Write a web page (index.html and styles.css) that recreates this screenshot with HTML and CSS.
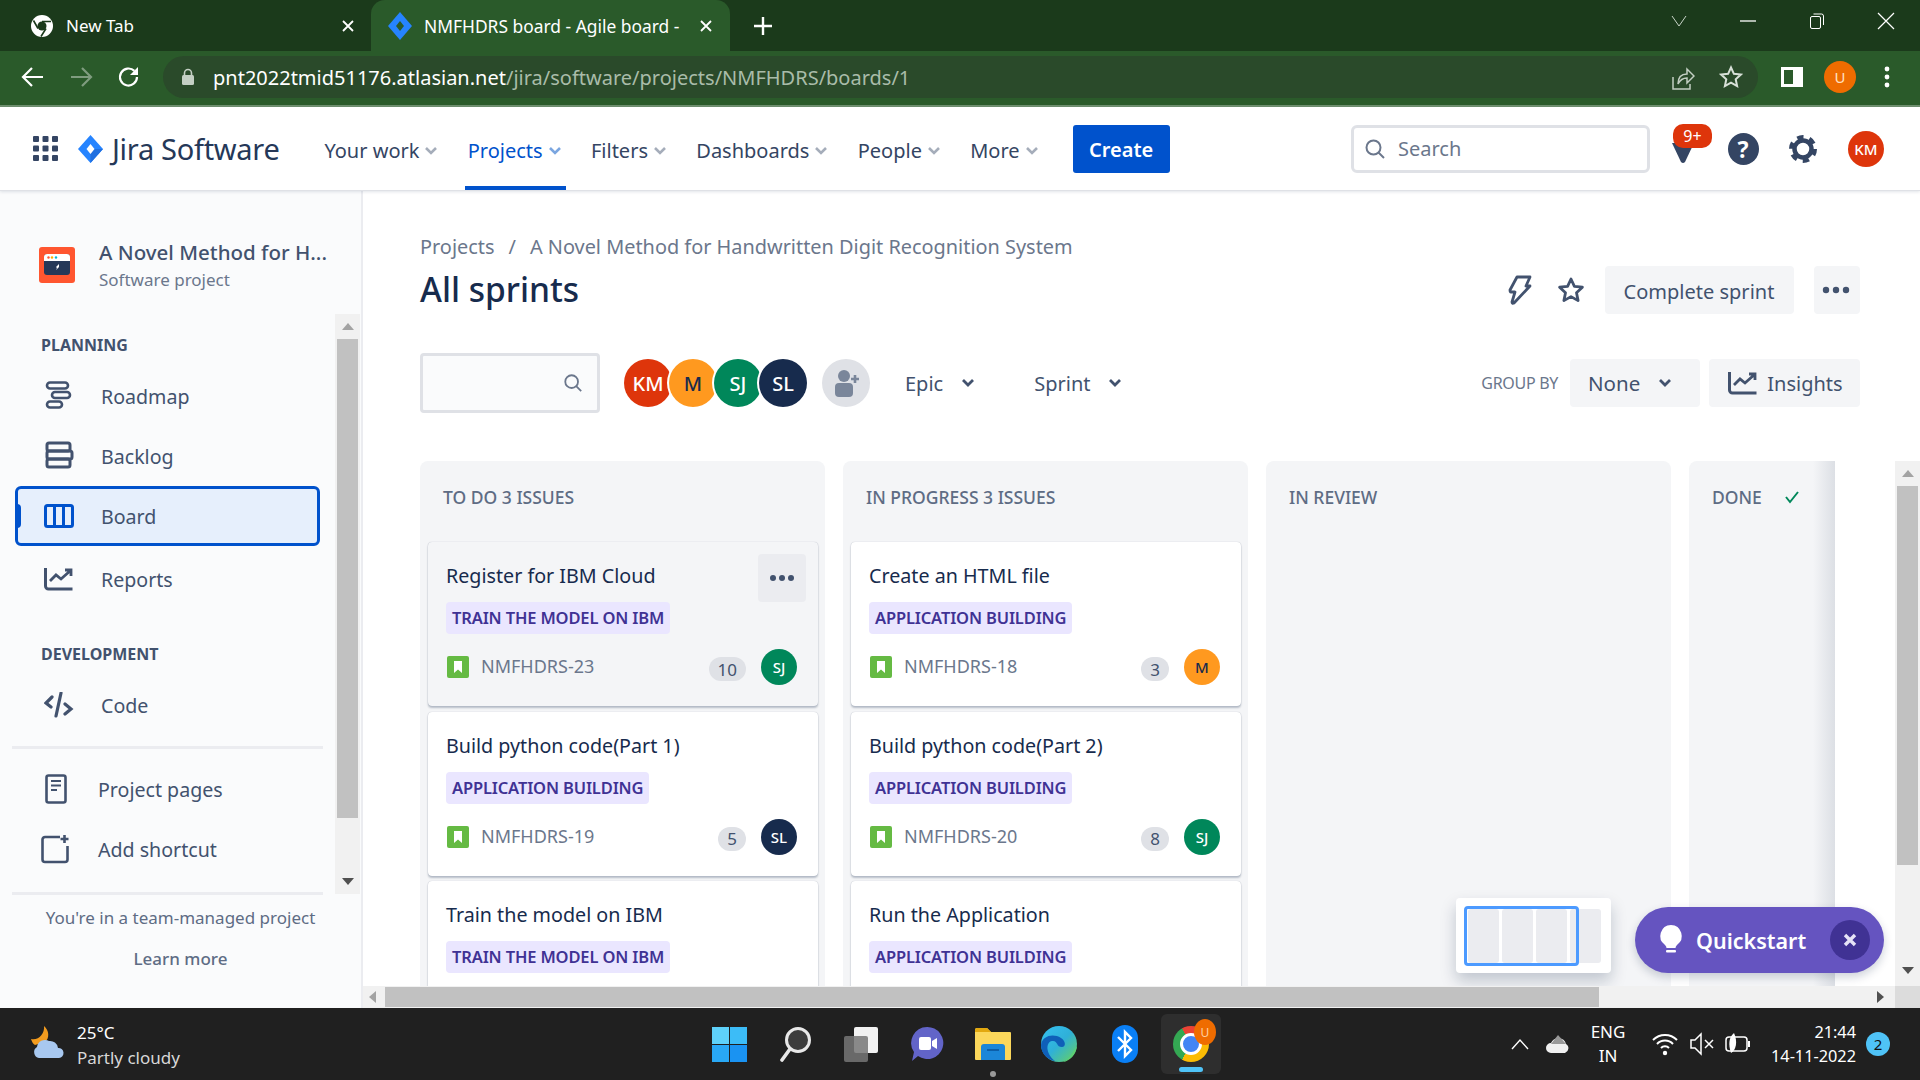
FILE: index.html
```html
<!DOCTYPE html>
<html lang="en">
<head>
<meta charset="utf-8">
<title>NMFHDRS board - Agile board</title>
<link rel="stylesheet" href="styles.css">
</head>
<body>
<header class="tabbar">
  <div class="tab">
    <svg class="fav" width="24" height="24" viewBox="0 0 24 24"><circle cx="12" cy="12" r="11" fill="#fff"/><circle cx="12" cy="12" r="4.5" fill="#1b3a1b"/><path d="M12 7.5h9M8 14.5 3.5 6.5M16 14.5 11 22.5" stroke="#1b3a1b" stroke-width="1.6" fill="none"/></svg>
    <span class="tab-title">New Tab</span>
    <svg class="tab-x" width="14" height="14" viewBox="0 0 14 14"><path d="M2 2l10 10M12 2 2 12" stroke="#fff" stroke-width="1.8"/></svg>
  </div>
  <div class="tab tab-active">
    <svg class="fav" width="24" height="28" viewBox="0 0 24 28"><path d="M12 0 24 14 12 28 0 14Z" fill="#2684ff"/><path d="M12 9 16 14 12 19 8 14Z" fill="#2a5a2a"/></svg>
    <span class="tab-title">NMFHDRS board - Agile board -</span>
    <svg class="tab-x" width="14" height="14" viewBox="0 0 14 14"><path d="M2 2l10 10M12 2 2 12" stroke="#fff" stroke-width="1.8"/></svg>
  </div>
  <svg class="newtab" width="20" height="20" viewBox="0 0 20 20"><path d="M10 1v18M1 10h18" stroke="#fff" stroke-width="2.4"/></svg>
  <div class="win-controls">
    <svg width="18" height="12" viewBox="0 0 18 12"><path d="M2 1l7 10 7-10" stroke="#c8d4c8" fill="none" stroke-width="1"/></svg>
    <svg width="16" height="4" viewBox="0 0 16 4"><path d="M0 2h16" stroke="#fff" stroke-width="1.3"/></svg>
    <svg width="16" height="16" viewBox="0 0 16 16"><rect x="1.5" y="3.5" width="10" height="12" rx="1.5" stroke="#fff" fill="none"/><path d="M4.5 1h8a2 2 0 0 1 2 2v9" stroke="#fff" fill="none"/></svg>
    <svg width="18" height="18" viewBox="0 0 18 18"><path d="M1 1l16 16M17 1 1 17" stroke="#fff" stroke-width="1.2"/></svg>
  </div>
</header>

<div class="toolbar">
  <svg class="tool" width="24" height="24" viewBox="0 0 24 24"><path d="M22 12H3M11 3l-9 9 9 9" stroke="#fff" stroke-width="2.2" fill="none"/></svg>
  <svg class="tool" width="24" height="24" viewBox="0 0 24 24"><path d="M2 12h19M13 3l9 9-9 9" stroke="#7f9c7f" stroke-width="2.2" fill="none"/></svg>
  <svg class="tool" width="24" height="24" viewBox="0 0 24 24"><path d="M20 12a8.5 8.5 0 1 1-2.6-6.1" stroke="#fff" stroke-width="2.2" fill="none"/><path d="M21 2v8h-8z" fill="#fff"/></svg>
  <div class="urlbar">
    <svg width="14" height="18" viewBox="0 0 14 18"><path d="M3.5 8V5a3.5 3.5 0 0 1 7 0v3" stroke="#c4cfc4" stroke-width="1.6" fill="none"/><rect x="1" y="7" width="12" height="10" rx="1.5" fill="#c4cfc4"/></svg>
    <span class="url"><span class="url-host">pnt2022tmid51176.atlasian.net</span>/jira/software/projects/NMFHDRS/boards/1</span>
    <svg class="url-share" width="24" height="26" viewBox="0 0 24 26"><path d="M2 13v12h17v-5" stroke="#c4cfc4" stroke-width="1.5" fill="none"/><path d="M7 20c0-7 4-10 9-10V5l7 7-7 7v-5c-4 0-7 2-9 6z" stroke="#c4cfc4" stroke-width="1.5" fill="none"/></svg>
    <svg width="24" height="24" viewBox="0 0 24 24"><path d="M12 2.500l2.900 6.300 6.900.8-5.100 4.700 1.400 6.800-6.100-3.400-6.100 3.400 1.400-6.800-5.100-4.700 6.900-.8z" stroke="#d8e0d8" stroke-width="2" fill="none"/></svg>
  </div>
  <svg class="panel" width="22" height="20" viewBox="0 0 22 20"><rect x="1.500" y="1.500" width="19" height="17" stroke="#fff" stroke-width="3" fill="none"/><rect x="12" y="1" width="9" height="18" fill="#fff"/></svg>
  <span class="profile">U</span>
  <svg class="dots" width="6" height="22" viewBox="0 0 6 22"><circle cx="3" cy="3" r="2.400" fill="#fff"/><circle cx="3" cy="11" r="2.400" fill="#fff"/><circle cx="3" cy="19" r="2.400" fill="#fff"/></svg>
</div>

<nav class="topnav">
  <svg class="apps" width="25" height="25" viewBox="0 0 25 25"><g fill="#344563"><rect width="6" height="6" rx="1"/><rect x="9.500" width="6" height="6" rx="1"/><rect x="19" width="6" height="6" rx="1"/><rect y="9.500" width="6" height="6" rx="1"/><rect x="9.500" y="9.500" width="6" height="6" rx="1"/><rect x="19" y="9.500" width="6" height="6" rx="1"/><rect y="19" width="6" height="6" rx="1"/><rect x="9.500" y="19" width="6" height="6" rx="1"/><rect x="19" y="19" width="6" height="6" rx="1"/></g></svg>
  <div class="brand">
    <svg width="25" height="28" viewBox="0 0 25 28"><path d="M12.500 0 25 14 12.500 28 0 14Z" fill="#2684ff"/><path d="M12.500 14 25 14 12.500 28Z" fill="#1f6fe0"/><path d="M12.500 9 16.500 14 12.500 19 8.500 14Z" fill="#fff"/></svg>
    <span>Jira Software</span>
  </div>
  <div class="nav-items">
    <span class="nav-item">Your work<svg class="chev" width="16" height="12" viewBox="0 0 16 12"><path d="M3 3l5 5 5-5" stroke="#a5adba" stroke-width="2.600" fill="none"/></svg></span>
    <span class="nav-item nav-current">Projects<svg class="chev" width="16" height="12" viewBox="0 0 16 12"><path d="M3 3l5 5 5-5" stroke="#7ba6e0" stroke-width="2.600" fill="none"/></svg></span>
    <span class="nav-item">Filters<svg class="chev" width="16" height="12" viewBox="0 0 16 12"><path d="M3 3l5 5 5-5" stroke="#a5adba" stroke-width="2.600" fill="none"/></svg></span>
    <span class="nav-item">Dashboards<svg class="chev" width="16" height="12" viewBox="0 0 16 12"><path d="M3 3l5 5 5-5" stroke="#a5adba" stroke-width="2.600" fill="none"/></svg></span>
    <span class="nav-item">People<svg class="chev" width="16" height="12" viewBox="0 0 16 12"><path d="M3 3l5 5 5-5" stroke="#a5adba" stroke-width="2.600" fill="none"/></svg></span>
    <span class="nav-item">More<svg class="chev" width="16" height="12" viewBox="0 0 16 12"><path d="M3 3l5 5 5-5" stroke="#a5adba" stroke-width="2.600" fill="none"/></svg></span>
  </div>
  <button class="create">Create</button>
  <div class="search">
    <svg width="22" height="22" viewBox="0 0 22 22"><circle cx="9.500" cy="9.500" r="7" stroke="#6b778c" stroke-width="2" fill="none"/><path d="M14.500 14.500 20 20" stroke="#6b778c" stroke-width="2"/></svg>
    <span>Search</span>
  </div>
  <div class="nav-cell nav-bell">
    <svg width="24" height="24" viewBox="0 0 24 24"><path d="M1 3h22L14 22q-2 2-4 0z" fill="#344563"/></svg>
    <span class="badge">9+</span>
  </div>
  <div class="nav-cell">
    <span class="help">?</span>
  </div>
  <div class="nav-cell">
    <svg width="30" height="30" viewBox="0 0 30 30"><circle cx="15" cy="15" r="8.500" stroke="#344563" stroke-width="4.500" fill="none"/><circle cx="15" cy="15" r="12" stroke="#344563" stroke-width="4" fill="none" stroke-dasharray="6.420 6.150"/></svg>
  </div>
  <div class="nav-cell nav-me"><span class="avatar av-km">KM</span></div>
</nav>

<div class="workspace">
  <aside class="sidebar">
    <div class="project">
      <svg width="36" height="36" viewBox="0 0 36 36"><rect width="36" height="36" rx="3" fill="#ff5630"/><rect x="5" y="7" width="26" height="21" rx="3" fill="#253858"/><path d="M5 14v-4a3 3 0 0 1 3-3h20a3 3 0 0 1 3 3v4z" fill="#fff"/><circle cx="9.500" cy="10.500" r="1.200" fill="#ff5630"/><circle cx="13" cy="10.500" r="1.200" fill="#ffab00"/><circle cx="17" cy="10.500" r="1.200" fill="#00b8d9"/><path d="M20 17l-3 3 1 1-1 2 3-3z" fill="#fff"/></svg>
      <div class="project-text">
        <div class="project-name">A Novel Method for H...</div>
        <div class="project-type">Software project</div>
      </div>
    </div>
    <div class="side-scroll">
      <div class="side-nav">
        <div class="side-heading">PLANNING</div>
        <div class="side-item">
          <svg width="30" height="30" viewBox="0 0 30 30"><g fill="none" stroke="#42526e" stroke-width="2.600"><rect x="3" y="1.500" width="21" height="6" rx="3"/><rect x="8" y="11" width="18" height="6" rx="3"/><rect x="3" y="20.500" width="15" height="6" rx="3"/></g></svg>
          <span>Roadmap</span>
        </div>
        <div class="side-item">
          <svg width="30" height="30" viewBox="0 0 30 30"><g fill="none" stroke="#42526e" stroke-width="3"><rect x="3" y="2" width="23" height="8" rx="2"/><rect x="3" y="10" width="25" height="8" rx="2"/><rect x="3" y="18" width="23" height="8" rx="2"/></g></svg>
          <span>Backlog</span>
        </div>
        <div class="side-item side-active">
          <svg width="30" height="24" viewBox="0 0 30 24"><rect x="1.500" y="1.500" width="27" height="21" rx="2" stroke="#0052cc" stroke-width="3" fill="none"/><path d="M10.500 1v22M19.500 1v22" stroke="#0052cc" stroke-width="3"/></svg>
          <span>Board</span>
        </div>
        <div class="side-item side-reports">
          <svg width="30" height="24" viewBox="0 0 30 24"><path d="M1.500 1v18a3 3 0 0 0 3 3h24" stroke="#42526e" stroke-width="3" fill="none"/><path d="M6 14l6-6 5 4 9-8M21 3h6v6" stroke="#42526e" stroke-width="2.800" fill="none"/></svg>
          <span>Reports</span>
        </div>
        <div class="side-heading side-heading-dev">DEVELOPMENT</div>
        <div class="side-item">
          <svg width="30" height="26" viewBox="0 0 30 26"><path d="M8 5 2 11l5 4M21 12l6 5-6 5M17 1l-5 23" stroke="#42526e" stroke-width="3.200" stroke-linecap="round" fill="none"/></svg>
          <span>Code</span>
        </div>
        <div class="side-divider"></div>
        <div class="side-item side-tight">
          <svg width="30" height="30" viewBox="0 0 30 30"><rect x="2.500" y="1.500" width="19" height="27" rx="2" stroke="#42526e" stroke-width="2.600" fill="none"/><path d="M7 7h10M7 11.500h10M7 16h6" stroke="#42526e" stroke-width="2.200"/></svg>
          <span>Project pages</span>
        </div>
        <div class="side-item side-tight">
          <svg class="side-add" width="30" height="30" viewBox="0 0 30 30"><path d="M19 3H4a2.500 2.500 0 0 0-2.500 2.500v20A2.500 2.500 0 0 0 4 28h20a2.500 2.500 0 0 0 2.500-2.500V12" stroke="#42526e" stroke-width="2.600" fill="none"/><path d="M23.500 1v8M19.500 5h8" stroke="#42526e" stroke-width="2.600"/></svg>
          <span>Add shortcut</span>
        </div>
      </div>
      <div class="vscroll vscroll-side">
        <span class="arrow arrow-up"></span>
        <div class="vthumb vthumb-side"></div>
        <span class="arrow arrow-down"></span>
      </div>
    </div>
    <div class="side-divider side-divider-b"></div>
    <div class="side-foot">
      <div class="side-foot-text">You're in a team-managed project</div>
      <div class="side-foot-link">Learn more</div>
    </div>
  </aside>

  <main class="main">
    <div class="crumbs"><span>Projects</span><span class="slash">/</span><span>A Novel Method for Handwritten Digit Recognition System</span></div>
    <div class="title-row">
      <h1>All sprints</h1>
      <div class="title-actions">
        <svg class="bolt" width="24" height="30" viewBox="0 0 24 30"><path d="M9 2h13l-4 9h4L6 28q-2 1-2-1l3-10H3q-1 0-1-2z" stroke="#42526e" stroke-width="2.800" stroke-linejoin="round" fill="none"/></svg>
        <svg class="star" width="28" height="28" viewBox="0 0 28 28"><path d="M14 3l3.400 7.300 8 .9-5.900 5.500 1.600 7.900-7.100-4-7.100 4 1.600-7.900L2.600 11.200l8-.9z" stroke="#42526e" stroke-width="2.800" stroke-linejoin="round" fill="none"/></svg>
        <button class="btn btn-complete">Complete sprint</button>
        <button class="btn btn-more"><svg width="28" height="8" viewBox="0 0 28 8"><circle cx="4" cy="4" r="3.200" fill="#42526e"/><circle cx="14" cy="4" r="3.200" fill="#42526e"/><circle cx="24" cy="4" r="3.200" fill="#42526e"/></svg></button>
      </div>
    </div>
    <div class="filter-row">
      <div class="filter-search">
        <svg width="20" height="20" viewBox="0 0 22 22"><circle cx="9.500" cy="9.500" r="7" stroke="#6b778c" stroke-width="2" fill="none"/><path d="M14.500 14.500 20 20" stroke="#6b778c" stroke-width="2"/></svg>
      </div>
      <div class="avatars">
        <span class="avatar avatar-lg av-km">KM</span>
        <span class="avatar avatar-lg av-m">M</span>
        <span class="avatar avatar-lg av-sj">SJ</span>
        <span class="avatar avatar-lg av-sl">SL</span>
      </div>
      <span class="add-person"><svg width="30" height="30" viewBox="0 0 30 30"><circle cx="13" cy="8" r="6" fill="#7a869a"/><rect x="4" y="15" width="18" height="14" rx="4" fill="#7a869a"/><path d="M24 7v8M20 11h8" stroke="#7a869a" stroke-width="2.600"/></svg></span>
      <span class="filter-drop filter-epic">Epic<svg width="16" height="12" viewBox="0 0 16 12"><path d="M3 3l5 5 5-5" stroke="#42526e" stroke-width="2.800" fill="none"/></svg></span>
      <span class="filter-drop filter-sprint">Sprint<svg width="16" height="12" viewBox="0 0 16 12"><path d="M3 3l5 5 5-5" stroke="#42526e" stroke-width="2.800" fill="none"/></svg></span>
      <div class="filter-right">
        <span class="group-label">GROUP BY</span>
        <button class="btn btn-none">None<svg width="16" height="12" viewBox="0 0 16 12"><path d="M3 3l5 5 5-5" stroke="#42526e" stroke-width="2.800" fill="none"/></svg></button>
        <button class="btn btn-insights"><svg width="30" height="24" viewBox="0 0 30 24"><path d="M1.500 1v18a3 3 0 0 0 3 3h24" stroke="#42526e" stroke-width="3" fill="none"/><path d="M6 14l6-6 5 4 9-8M21 3h6v6" stroke="#42526e" stroke-width="2.800" fill="none"/></svg>Insights</button>
      </div>
    </div>

    <div class="board-wrap">
      <div class="board-view">
        <div class="board">
          <section class="col">
            <div class="col-head">TO DO 3 ISSUES</div>
            <div class="card card-hover">
              <div class="card-title">Register for IBM Cloud</div>
              <div class="tag">TRAIN THE MODEL ON IBM</div>
              <div class="card-foot">
                <svg class="story" width="22" height="22" viewBox="0 0 22 22"><rect width="22" height="22" rx="2" fill="#65ba43"/><path d="M7 5h8v12l-4-3.500L7 17z" fill="#fff"/></svg>
                <span class="key">NMFHDRS-23</span>
                <span class="points">10</span>
                <span class="avatar av-sj">SJ</span>
              </div>
              <span class="card-menu"><svg width="26" height="8" viewBox="0 0 26 8"><circle cx="4" cy="4" r="3" fill="#42526e"/><circle cx="13" cy="4" r="3" fill="#42526e"/><circle cx="22" cy="4" r="3" fill="#42526e"/></svg></span>
            </div>
            <div class="card">
              <div class="card-title">Build python code(Part 1)</div>
              <div class="tag">APPLICATION BUILDING</div>
              <div class="card-foot">
                <svg class="story" width="22" height="22" viewBox="0 0 22 22"><rect width="22" height="22" rx="2" fill="#65ba43"/><path d="M7 5h8v12l-4-3.500L7 17z" fill="#fff"/></svg>
                <span class="key">NMFHDRS-19</span>
                <span class="points">5</span>
                <span class="avatar av-sl">SL</span>
              </div>
            </div>
            <div class="card">
              <div class="card-title">Train the model on IBM</div>
              <div class="tag">TRAIN THE MODEL ON IBM</div>
            </div>
          </section>
          <section class="col">
            <div class="col-head">IN PROGRESS 3 ISSUES</div>
            <div class="card">
              <div class="card-title">Create an HTML file</div>
              <div class="tag">APPLICATION BUILDING</div>
              <div class="card-foot">
                <svg class="story" width="22" height="22" viewBox="0 0 22 22"><rect width="22" height="22" rx="2" fill="#65ba43"/><path d="M7 5h8v12l-4-3.500L7 17z" fill="#fff"/></svg>
                <span class="key">NMFHDRS-18</span>
                <span class="points">3</span>
                <span class="avatar av-m">M</span>
              </div>
            </div>
            <div class="card">
              <div class="card-title">Build python code(Part 2)</div>
              <div class="tag">APPLICATION BUILDING</div>
              <div class="card-foot">
                <svg class="story" width="22" height="22" viewBox="0 0 22 22"><rect width="22" height="22" rx="2" fill="#65ba43"/><path d="M7 5h8v12l-4-3.500L7 17z" fill="#fff"/></svg>
                <span class="key">NMFHDRS-20</span>
                <span class="points">8</span>
                <span class="avatar av-sj">SJ</span>
              </div>
            </div>
            <div class="card">
              <div class="card-title">Run the Application</div>
              <div class="tag">APPLICATION BUILDING</div>
            </div>
          </section>
          <section class="col">
            <div class="col-head">IN REVIEW</div>
          </section>
          <section class="col">
            <div class="col-head">DONE<svg class="done-check" width="16" height="14" viewBox="0 0 16 14"><path d="M2 7l4 5 8-10" stroke="#00875a" stroke-width="2" fill="none"/></svg></div>
          </section>
        </div>
        <div class="minimap">
          <div class="mini-col"></div><div class="mini-col"></div><div class="mini-col"></div><div class="mini-col"></div>
          <div class="mini-frame"></div>
        </div>
        <div class="quickstart">
          <svg width="26" height="32" viewBox="0 0 26 32"><path d="M13 1a11 11 0 0 0-6 20c1 1 1.500 2 1.500 3h9c0-1 .5-2 1.500-3a11 11 0 0 0-6-20z" fill="#fff"/><rect x="8" y="26" width="10" height="2.500" rx="1" fill="#fff"/></svg>
          <span>Quickstart</span>
          <span class="qs-close"><svg width="14" height="14" viewBox="0 0 14 14"><path d="M2 2l10 10M12 2 2 12" stroke="#e6e3f7" stroke-width="3.400"/></svg></span>
        </div>
      </div>
      <div class="vscroll vscroll-main">
        <span class="arrow arrow-up"></span>
        <div class="vthumb vthumb-main"></div>
        <span class="arrow arrow-down"></span>
      </div>
    </div>
    <div class="hscroll">
      <span class="arrow arrow-left"></span>
      <div class="hthumb"></div>
      <span class="arrow arrow-right"></span>
      <span class="corner"></span>
    </div>
  </main>
</div>

<footer class="taskbar">
  <div class="weather">
    <svg width="36" height="36" viewBox="0 0 36 36"><path d="M14 0c5 4 6 12 1 16l-10 3c-2-1-3-3-4-6 7 2 14-5 13-13z" fill="#f39c1f"/><path d="M9 32a6 6 0 0 1-2-11 8 8 0 0 1 12-6 8 8 0 0 1 9 7 5 5 0 0 1 1 10z" fill="#a8c8f0"/></svg>
    <div class="weather-text"><div class="w-temp">25°C</div><div class="w-desc">Partly cloudy</div></div>
  </div>
  <div class="tb-center">
    <span class="tb-icon"><svg width="35" height="35" viewBox="0 0 35 35"><rect width="17" height="17" fill="#5ed1fa"/><rect x="18" width="17" height="17" fill="#3cbcf7"/><rect y="18" width="17" height="17" fill="#29a8f5"/><rect x="18" y="18" width="17" height="17" fill="#1a93f2"/></svg></span>
    <span class="tb-icon"><svg width="34" height="36" viewBox="0 0 34 36"><circle cx="20" cy="14" r="11.500" fill="#3c3c3c" stroke="#e8e8e8" stroke-width="3"/><path d="M12 23 4 34" stroke="#e8e8e8" stroke-width="3.600" stroke-linecap="round"/></svg></span>
    <span class="tb-icon"><svg width="36" height="36" viewBox="0 0 36 36"><rect x="11" y="1" width="24" height="26" rx="2" fill="#f2f2f2"/><rect x="1" y="10" width="24" height="26" rx="2" fill="#777" opacity=".85"/></svg></span>
    <span class="tb-icon"><svg width="34" height="36" viewBox="0 0 34 36"><path d="M17 1a16 16 0 1 1-9 29l-6 5 2-9A16 16 0 0 1 17 1z" fill="#6264c8"/><rect x="9" y="11" width="12" height="13" rx="2" fill="#fff"/><path d="M22 15l5-3v11l-5-3z" fill="#fff"/></svg></span>
    <span class="tb-icon tb-files"><svg width="38" height="34" viewBox="0 0 38 34"><path d="M1 3a2 2 0 0 1 2-2h10l4 4h19a1 1 0 0 1 1 1v26a1 1 0 0 1-1 1H2a1 1 0 0 1-1-1z" fill="#fbd75b"/><path d="M1 3a2 2 0 0 1 2-2h10l4 4H1z" fill="#e2a80f"/><path d="M7 20a3 3 0 0 1 3-3h18a3 3 0 0 1 3 3v13H7z" fill="#1b86d8"/><rect x="13" y="22" width="12" height="2" fill="#0c5ea8"/></svg></span>
    <span class="tb-icon"><svg width="38" height="38" viewBox="0 0 38 38"><defs><linearGradient id="edge" x1="0" y1="0" x2="1" y2="1"><stop offset="0" stop-color="#35c1f1"/><stop offset=".5" stop-color="#2fb0d8"/><stop offset="1" stop-color="#6ad35a"/></linearGradient></defs><circle cx="19" cy="19" r="18" fill="url(#edge)"/><path d="M1 20c1-9 12-12 20-7 5 3 5 9 1 9-6 0-4-7-10-6-6 1-7 12 3 20C8 35 1 29 1 20z" fill="#0f5fb8"/><path d="M37 21c-1 9-7 15-14 16 3-2 6-3 8-7 2-3 4-6 6-9z" fill="#5ccf74"/></svg></span>
    <span class="tb-icon"><svg width="26" height="38" viewBox="0 0 26 38"><rect width="26" height="38" rx="13" fill="#0a7ff5"/><path d="M6 12 19 25l-6 6V7l6 6L6 26" stroke="#fff" stroke-width="2.400" fill="none"/></svg></span>
    <span class="tb-icon tb-active">
      <span class="chrome-logo"><span class="chrome-core"></span></span>
      <span class="chrome-u">U</span>
      <span class="tb-line"></span>
    </span>
  </div>
  <div class="tray">
    <svg class="tr-chev" width="18" height="12" viewBox="0 0 18 12"><path d="M1 11l8-9 8 9" stroke="#fff" stroke-width="1.400" fill="none"/></svg>
    <svg class="tr-cloud" width="26" height="22" viewBox="0 0 26 22"><path d="M6 20a5 5 0 0 1 0-10 8 8 0 0 1 15 1 5 5 0 0 1-1 9z" fill="#f0f0f0"/><path d="M6 11 13 2l8 9z" fill="#999"/></svg>
    <div class="lang"><div>ENG</div><div>IN</div></div>
    <svg class="tr-wifi" width="26" height="24" viewBox="0 0 26 24"><path d="M1 8a17 17 0 0 1 24 0M5 12a11 11 0 0 1 16 0M9 16a5.500 5.500 0 0 1 8 0" stroke="#fff" stroke-width="2" fill="none"/><circle cx="13" cy="21" r="2.200" fill="#fff"/></svg>
    <svg class="tr-mute" width="26" height="24" viewBox="0 0 26 24"><path d="M2 8h4l6-6v20l-6-6H2z" stroke="#fff" stroke-width="1.500" fill="none"/><path d="M16 8l8 8M24 8l-8 8" stroke="#fff" stroke-width="1.500"/></svg>
    <svg class="tr-batt" width="26" height="24" viewBox="0 0 26 24"><rect x="1" y="5" width="21" height="14" rx="3" stroke="#fff" stroke-width="1.500" fill="none"/><rect x="23" y="9" width="2" height="6" fill="#fff"/><path d="M9 1c-5 4-6 11-3 20 5-3 7-11 3-20z" fill="#fff"/></svg>
    <div class="clock"><div>21:44</div><div>14-11-2022</div></div>
    <span class="notif">2</span>
  </div>
</footer>
</body>
</html>
```

FILE: styles.css
```css
* { box-sizing: border-box; }
html, body { margin: 0; padding: 0; }
body {
  width: 1920px;
  height: 1080px;
  overflow: hidden;
  display: flex;
  flex-direction: column;
  font-family: "Noto Sans", "Open Sans", sans-serif;
  color: #42526e;
  background: #fff;
}
svg { display: block; flex-shrink: 0; }
button { font-family: inherit; border: 0; }

/* browser tabs */
.tabbar { height: 51px; background: #1b3a1b; display: flex; align-items: stretch; }
.tab {
  width: 371px; display: flex; align-items: center; padding: 0 16px 0 30px;
  color: #fff; font-size: 17px;
}
.tab .fav { margin-right: 12px; }
.tab-title { flex: 1; white-space: nowrap; overflow: hidden; }
.tab-active {
  width: 359px; background: #2a5a2a; border-radius: 14px 14px 0 0;
  padding: 0 17px 0 17px; font-size: 17.400px;
}
.newtab { align-self: center; margin-left: 23px; }
.win-controls {
  margin-left: auto; width: 250px; padding: 0 25px 9px 0;
  display: flex; align-items: center; justify-content: space-between;
}

/* browser toolbar */
.toolbar {
  height: 56px; background: #2a5a2a; border-bottom: 2px solid #6f8f6f;
  display: flex; align-items: center; padding: 0 0 2px 21px; flex-shrink: 0;
}
.tool { margin-right: 24px; }
.tool:nth-of-type(3) { margin-right: 22px; }
.urlbar {
  width: 1595px; height: 42px; background: #2a4a2a; border-radius: 21px;
  display: flex; align-items: center; padding: 0 15px 0 18px;
}
.url { margin: 1px 0 0 18px; font-size: 20px; color: #a9bca9; white-space: nowrap; flex: 1; }
.url-host { color: #fff; }
.url-share { margin-right: 24px; }
.panel { margin-left: 23px; }
.profile {
  margin-left: 21px; width: 32px; height: 32px; border-radius: 50%;
  background: #ef6c00; color: #ffe0c0; font-size: 15px;
  display: flex; align-items: center; justify-content: center;
}
.dots { margin-left: 28px; }

/* jira nav */
.topnav {
  height: 84px; display: flex; align-items: center; padding: 0 24px 0 33px;
  background: #fff; border-bottom: 1px solid #dfe1e6;
  box-shadow: 0 1px 3px rgba(9,30,66,.12); position: relative; flex-shrink: 0; z-index: 2;
}
.brand { display: flex; align-items: center; gap: 9px; margin-left: 20px; font-size: 29px; color: #253858; letter-spacing: -.3px; }
.nav-items { display: flex; gap: 28.300px; margin-left: 45px; margin-top: 3px; }
.nav-item { display: flex; align-items: center; font-size: 20px; color: #344563; white-space: nowrap; position: relative; }
.nav-item .chev { margin-left: 4px; margin-top: 1px; }
.nav-current { color: #0052cc; }
.nav-current::after {
  content: ""; position: absolute; left: -3px; right: -3px; top: 49px; height: 4px; background: #0052cc;
}
.create {
  margin-left: 33px; width: 97px; height: 48px; background: #0052cc; color: #fff; padding-top: 3px;
  border-radius: 3px; font-size: 20px; font-weight: 600;
}
.search {
  margin-left: auto; width: 299px; height: 48px; border: 3px solid #dfe1e6; border-radius: 6px;
  display: flex; align-items: center; gap: 12px; padding-left: 10px; font-size: 20px; color: #6b778c;
}
.nav-cell { width: 60px; height: 48px; display: flex; align-items: center; justify-content: center; position: relative; }
.nav-bell { margin-left: 3px; }
.nav-bell svg { margin-top: 6px; }
.nav-me { margin-left: 3px; }
.badge {
  position: absolute; left: 20px; top: -1px; width: 39px; height: 24px; border-radius: 10px;
  background: #de350b; color: #fff; font-size: 16px; text-align: center; line-height: 24px;
}
.help {
  width: 31px; height: 32px; border-radius: 50%; background: #344563; color: #fff;
  font-size: 23px; font-weight: 700; text-align: center; line-height: 32px;
}

/* avatars */
.avatar {
  width: 36px; height: 36px; border-radius: 50%; display: flex; align-items: center; justify-content: center;
  color: #fff; font-size: 15px; font-weight: 500; flex-shrink: 0;
}
.av-km { background: #de350b; }
.av-m { background: #ff991f; color: #172b4d; }
.av-sj { background: #00875a; }
.av-sl { background: #172b4d; }

/* layout */
.workspace { flex: 1; display: flex; min-height: 0; }

/* sidebar */
.sidebar { width: 363px; flex-shrink: 0; background: #fafbfc; border-right: 2px solid #ebecf0; display: flex; flex-direction: column; }
.project { height: 123px; padding: 56px 0 0 39px; display: flex; gap: 24px; flex-shrink: 0; }
.project-text { margin-top: -9px; }
.project-name { font-size: 20.500px; font-weight: 500; color: #42526e; line-height: 28px; white-space: nowrap; }
.project-type { font-size: 17px; color: #6b778c; line-height: 28px; }
.side-scroll { height: 578px; display: flex; flex-shrink: 0; }
.side-nav { width: 335px; }
.side-heading { margin: 20px 0 10px 41px; height: 22px; font-size: 16px; line-height: 22px; font-weight: 700; color: #42526e; }
.side-heading-dev { margin-top: 34px; }
.side-item {
  margin-left: 15px; width: 305px; height: 60px; border: 3px solid transparent; border-radius: 6px;
  display: flex; align-items: center; gap: 27px; padding-left: 26px; font-size: 19.600px; color: #42526e; position: relative;
}
.side-tight { gap: 24px; }
.side-add { margin-left: -3px; margin-right: 3px; }
.side-active { background: #e6effc; border-color: #0052cc; }
.side-active::before {
  content: ""; position: absolute; left: -3px; top: 15px; width: 6px; height: 24px;
  background: #0052cc; border-radius: 0 4px 4px 0;
}
.side-reports { margin-top: 3px; }
.side-divider { margin: 11px 0 10px 12px; width: 311px; height: 3px; background: #ebecf0; }
.side-divider-b { margin: 0 0 0 12px; }
.side-foot { text-align: center; color: #5e6c84; padding-left: 0; }
.side-foot-text { margin-top: 10px; font-size: 17px; line-height: 26px; }
.side-foot-link { margin-top: 15px; font-size: 17px; line-height: 26px; font-weight: 500; }

/* scrollbars */
.vscroll { width: 25px; background: #f1f1f1; display: flex; flex-direction: column; align-items: center; flex-shrink: 0; justify-content: flex-start; padding: 0 2px; }
.vscroll-side { height: 580px; }
.vscroll-main { height: 525px; }
.vthumb { width: 21px; background: #c1c1c1; flex-shrink: 0; }
.vthumb-side { height: 479px; margin-top: 9px; margin-bottom: 60px; }
.vthumb-main { height: 379px; margin-top: 9px; margin-bottom: 102px; }
.arrow { width: 0; height: 0; display: block; flex-shrink: 0; }
.arrow-up { margin-top: 9px; border-left: 6px solid transparent; border-right: 6px solid transparent; border-bottom: 7px solid #a3a3a3; }
.arrow-down { border-left: 6px solid transparent; border-right: 6px solid transparent; border-top: 7px solid #505050; }
.arrow-left { margin-left: 6px; border-top: 6px solid transparent; border-bottom: 6px solid transparent; border-right: 7px solid #a3a3a3; }
.arrow-right { margin-left: auto; border-top: 6px solid transparent; border-bottom: 6px solid transparent; border-left: 7px solid #505050; }
.hscroll { height: 22px; background: #f1f1f1; display: flex; align-items: center; flex-shrink: 0; }
.hthumb { width: 1214px; height: 20px; background: #c1c1c1; margin-left: 9px; }
.corner { width: 25px; height: 22px; background: #dcdcdc; margin-left: 11px; }

/* main */
.main { flex: 1; min-width: 0; display: flex; flex-direction: column; background: #fff; }
.crumbs { margin: 42px 0 0 57px; height: 28px; display: flex; font-size: 19.900px; line-height: 28px; color: #6b778c; flex-shrink: 0; }
.slash { margin: 0 14px; }
.title-row { margin: 4px 60px 0 57px; height: 50px; display: flex; align-items: center; justify-content: space-between; flex-shrink: 0; }
h1 { margin: -2px 0 0; font-size: 33.500px; font-weight: 500; color: #172b4d; }
.title-actions { display: flex; align-items: center; }
.bolt { margin-right: 25px; }
.star { margin-right: 20px; }
.btn {
  height: 48px; background: #f4f5f7; color: #42526e; border-radius: 4px; font-size: 20px;
  display: flex; align-items: center; justify-content: center;
}
.btn-complete { width: 189px; padding: 2px 1px 0 0; }
.btn-more { width: 46px; margin-left: 20px; padding: 0 3px 0 0; }
.filter-row { margin: 38px 60px 0 57px; height: 60px; display: flex; align-items: center; flex-shrink: 0; }
.filter-search {
  width: 180px; height: 60px; border: 3px solid #dfe1e6; border-radius: 4px; background: #fafbfc;
  display: flex; align-items: center; justify-content: flex-end; padding-right: 14px;
}
.avatars { display: flex; margin-left: 24px; }
.avatar-lg { width: 48px; height: 48px; font-size: 20px; margin-right: -3px; box-shadow: 0 0 0 2px #fff; position: relative; }
.add-person {
  margin-left: 18px; width: 48px; height: 48px; border-radius: 50%; background: #dfe1e6;
  display: flex; align-items: center; justify-content: center;
}
.filter-drop { display: flex; align-items: center; gap: 17px; font-size: 20px; color: #42526e; }
.filter-epic { margin-left: 35px; }
.filter-sprint { margin-left: 58px; }
.filter-right { margin-left: auto; display: flex; align-items: center; }
.group-label { font-size: 16px; color: #6b778c; margin-right: 12px; letter-spacing: -.3px; }
.btn-none { width: 130px; gap: 17px; font-size: 20.500px; justify-content: flex-start; padding-left: 18px; }
.btn-insights { width: 151px; margin-left: 9px; gap: 9px; font-size: 20px; padding-left: 8px; }

/* board */
.board-wrap { margin-top: 48px; height: 525px; display: flex; flex-shrink: 0; }
.board-view { width: 1532px; padding-left: 57px; position: relative; overflow: hidden; flex-shrink: 0; }
.board { width: 1415px; height: 525px; display: flex; gap: 18px; overflow: hidden; position: relative; }
.board::after {
  content: ""; position: absolute; right: 0; top: 0; bottom: 0; width: 22px;
  background: linear-gradient(to right, rgba(9,30,66,0), rgba(9,30,66,.1));
}
.col { width: 405px; flex-shrink: 0; height: 540px; background: #f4f5f7; border-radius: 8px 8px 0 0; padding: 0 7px 0 8px; }
.col-head { height: 74px; padding: 0 0 2px 15px; margin-bottom: 7px; display: flex; align-items: center; font-size: 17.500px; font-weight: 500; color: #5e6c84; }
.done-check { margin-left: 22px; }
.card {
  height: 164px; margin-bottom: 5.500px; background: #fff; border-radius: 4px; padding: 20px 21px 0 18px; position: relative;
  box-shadow: 0 2px 2px rgba(9,30,66,.25), 0 0 1px rgba(9,30,66,.31);
}
.card-hover { background: #f4f5f7; }
.card-title { height: 28px; font-size: 19.700px; line-height: 28px; color: #172b4d; }
.tag {
  display: table; margin-top: 12px; height: 32px; padding: 0 6px; background: #eae6ff; color: #403294;
  border-radius: 4px; font-size: 16.500px; font-weight: 600; line-height: 32px; letter-spacing: -.15px;
}
.card-foot { margin-top: 11px; height: 44px; display: flex; align-items: center; }
.story { margin-left: 1px; }
.key { margin: -2px 0 0 12px; font-size: 18px; color: #6b778c; flex: 1; }
.points {
  min-width: 27px; height: 24px; margin: 4px 15px 0 0; padding: 0 9px; border-radius: 12px; background: #dfe1e6;
  display: flex; align-items: center; justify-content: center; font-size: 17px; color: #42526e;
}
.card-menu {
  position: absolute; right: 12px; top: 12px; width: 48px; height: 48px; background: #ebecf0; border-radius: 4px;
  display: flex; align-items: center; justify-content: center;
}

/* floating */
.minimap {
  position: absolute; left: 1093px; top: 437px; width: 155px; height: 75px; background: #fff; border-radius: 4px;
  box-shadow: 0 8px 16px rgba(9,30,66,.22); display: flex; gap: 3px; padding: 11px 10px 10px 12px;
}
.mini-col { flex: 1; background: #ebecf0; border-radius: 3px; }
.mini-frame { position: absolute; left: 8px; top: 8px; width: 115px; height: 60px; border: 3px solid #4c9aff; border-radius: 4px; }
.quickstart {
  position: absolute; left: 1272px; top: 446px; width: 249px; height: 66px; border-radius: 33px; background: #6554c0; color: #fff;
  display: flex; align-items: center; padding-left: 23px; font-size: 21.500px; font-weight: 600; box-shadow: 0 4px 10px rgba(9,30,66,.2);
}
.quickstart span:first-of-type { margin-left: 12px; }
.qs-close {
  margin-left: auto; margin-right: 14px; width: 40px; height: 40px; border-radius: 50%; background: #403294;
  display: flex; align-items: center; justify-content: center;
}

/* taskbar */
.taskbar { height: 72px; background: #202020; display: flex; align-items: center; flex-shrink: 0; color: #fff; }
.weather { width: 696px; padding-left: 30px; display: flex; align-items: center; gap: 11px; flex-shrink: 0; }
.weather-text { font-size: 17px; line-height: 25px; padding-top: 1px; }
.w-desc { color: #d8d8d8; }
.tb-center { display: flex; align-items: center; }
.tb-icon { width: 66px; height: 60px; display: flex; align-items: center; justify-content: center; position: relative; }
.tb-files::after { content: ""; position: absolute; bottom: -3px; left: 30px; width: 6px; height: 6px; border-radius: 50%; background: #9a9a9a; }
.tb-active { background: #2e2e2e; border-radius: 6px; width: 60px; margin-left: 3px; }
.chrome-logo {
  width: 36px; height: 36px; border-radius: 50%;
  background: conic-gradient(from -30deg, #ea4335 0 120deg, #fbbc04 120deg 240deg, #34a853 240deg 360deg);
  display: flex; align-items: center; justify-content: center;
}
.chrome-core { width: 16px; height: 16px; border-radius: 50%; background: #4285f4; border: 3px solid #fff; box-sizing: content-box; }
.chrome-u {
  position: absolute; right: 5px; top: 5px; width: 22px; height: 26px; border-radius: 50%; background: #ef6c00; color: #ffd0a0;
  font-size: 12px; display: flex; align-items: center; justify-content: center;
}
.tb-line { position: absolute; left: 18px; bottom: 2px; width: 24px; height: 5px; border-radius: 3px; background: #4fc3f7; }
.tray { margin-left: auto; display: flex; align-items: center; padding-right: 30px; }
.tr-cloud { margin-left: 16px; }
.lang { margin-left: 12px; width: 50px; text-align: center; font-size: 17px; line-height: 24px; }
.tr-wifi { margin-left: 19px; }
.tr-mute { margin-left: 11px; }
.tr-batt { margin-left: 10px; }
.clock { margin-left: 20px; text-align: right; font-size: 16.300px; line-height: 24px; }
.notif {
  margin-left: 10px; width: 24px; height: 24px; border-radius: 50%; background: #4fc3f7; color: #111;
  font-size: 15px; display: flex; align-items: center; justify-content: center;
}
```
